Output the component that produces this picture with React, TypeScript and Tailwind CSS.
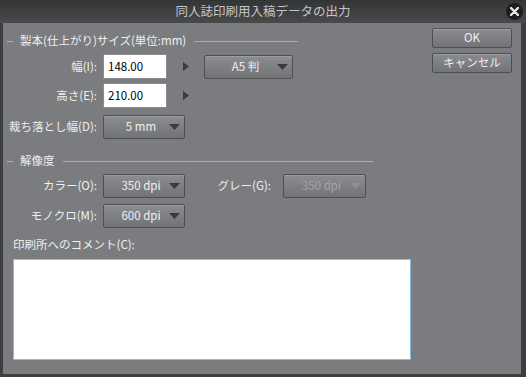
const FONT = { fontFamily: '"Noto Sans CJK JP", "Noto Sans", sans-serif' };

function Arrow() {
  return (
    <svg width="6" height="9" viewBox="0 0 6 9" className="shrink-0">
      <path d="M0 0 L6 4.5 L0 9 Z" fill="#3a3b3e" />
    </svg>
  );
}

function Select({ value, width, disabled }: { value: string; width: string; disabled?: boolean }) {
  return (
    <div
      className={`${width} h-[24px] flex items-center justify-between pl-[15px] pr-[4px] rounded-[2px] border border-[#4e4f53] bg-gradient-to-b from-[#8c8d91] to-[#727377] shadow-[inset_0_1px_0_#9c9da1]`}
    >
      <span className={`text-[11.5px] leading-none ${disabled ? "text-[#a3a4a8]" : "text-[#efefef]"} flex-1 text-center pr-[6px]`}>
        {value}
      </span>
      <svg width="11" height="6" viewBox="0 0 11 6">
        <path d="M0 0 L11 0 L5.5 6 Z" fill={disabled ? "#8e8f93" : "#3a3b3e"} />
      </svg>
    </div>
  );
}

function Input({ value }: { value: string }) {
  return (
    <div className="w-[64px] h-[25px] bg-white border border-[#8a8b8f] flex items-center pl-[4px]">
      <span className="text-[11.5px] leading-none text-black">{value}</span>
    </div>
  );
}

function Label({ text }: { text: string }) {
  return <div className="w-[94px] text-right text-[11.5px] leading-none text-[#efefef]">{text}</div>;
}

function Header({ text, width }: { text: string; width: string }) {
  return (
    <div className={`${width} ml-[4px] h-[14px] flex items-center`}>
      <div className="w-[6px] h-px bg-[#a9aaad]" />
      <span className="ml-[7px] text-[11.5px] leading-none text-[#efefef]">{text}</span>
      <div className="flex-1 h-px bg-[#a9aaad] ml-[8px]" />
    </div>
  );
}

function Button({ text }: { text: string }) {
  return (
    <div className="w-[80px] h-[20px] flex items-center justify-center rounded-[2px] border border-[#4e4f53] bg-gradient-to-b from-[#8a8b8f] to-[#737478] shadow-[inset_0_1px_0_#9c9da1]">
      <span className="text-[11.5px] leading-none text-[#efefef]">{text}</span>
    </div>
  );
}

export default function App() {
  return (
    <div className="w-[526px] h-[377px] bg-[#3d3e40] flex flex-col select-none" style={FONT}>
      {/* Title bar */}
      <div className="h-[23px] shrink-0 relative flex items-center justify-center bg-gradient-to-b from-[#333436] to-[#494a4c]">
        <span className="text-[12.5px] leading-none text-[#c4c5c8]">同人誌印刷用入稿データの出力</span>
        <div className="absolute right-[3px] top-[3px] w-[17px] h-[17px] rounded-full bg-[#1e1e20] flex items-center justify-center">
          <svg width="9" height="9" viewBox="0 0 9 9">
            <path d="M1 1 L8 8 M8 1 L1 8" stroke="#e8e8e8" strokeWidth="2.4" strokeLinecap="round" />
          </svg>
        </div>
      </div>

      {/* Body */}
      <div className="flex-1 ml-[3px] mr-[5px] mb-[3px] bg-[#7b7c80] flex">
        <div className="flex-1 flex flex-col">
          <div className="mt-[11px]">
            <Header text="製本(仕上がり)サイズ(単位:mm)" width="w-[291px]" />
          </div>

          <div className="mt-[6px] h-[25px] flex items-center gap-[6px]">
            <Label text="幅(I):" />
            <Input value="148.00" />
            <div className="ml-[10px]">
              <Arrow />
            </div>
            <div className="ml-[9px]">
              <Select value="A5 判" width="w-[89px]" />
            </div>
          </div>

          <div className="mt-[4px] h-[25px] flex items-center gap-[6px]">
            <Label text="高さ(E):" />
            <Input value="210.00" />
            <div className="ml-[10px]">
              <Arrow />
            </div>
          </div>

          <div className="mt-[7px] h-[24px] flex items-center gap-[6px]">
            <Label text="裁ち落とし幅(D):" />
            <Select value="5 mm" width="w-[82px]" />
          </div>

          <div className="mt-[15px]">
            <Header text="解像度" width="w-[366px]" />
          </div>

          <div className="mt-[6px] h-[24px] flex items-center gap-[6px]">
            <Label text="カラー(O):" />
            <Select value="350 dpi" width="w-[82px]" />
            <div className="w-[86px] pr-[6px] text-right text-[11.5px] leading-none text-[#efefef]">グレー(G):</div>
            <Select value="350 dpi" width="w-[83px]" disabled />
          </div>

          <div className="mt-[6px] h-[24px] flex items-center gap-[6px]">
            <Label text="モノクロ(M):" />
            <Select value="600 dpi" width="w-[82px]" />
          </div>

          <div className="mt-[10px] h-[14px] flex items-center ml-[10px]">
            <span className="text-[11.5px] leading-none text-[#efefef]">印刷所へのコメント(C):</span>
          </div>

          <div className="mt-[7px] ml-[10px] w-[398px] h-[101px] bg-white border border-[#86bddc]" />
        </div>

        <div className="w-[80px] mr-[9px] mt-[5px] flex flex-col gap-[5px]">
          <Button text="OK" />
          <Button text="キャンセル" />
        </div>
      </div>
    </div>
  );
}
